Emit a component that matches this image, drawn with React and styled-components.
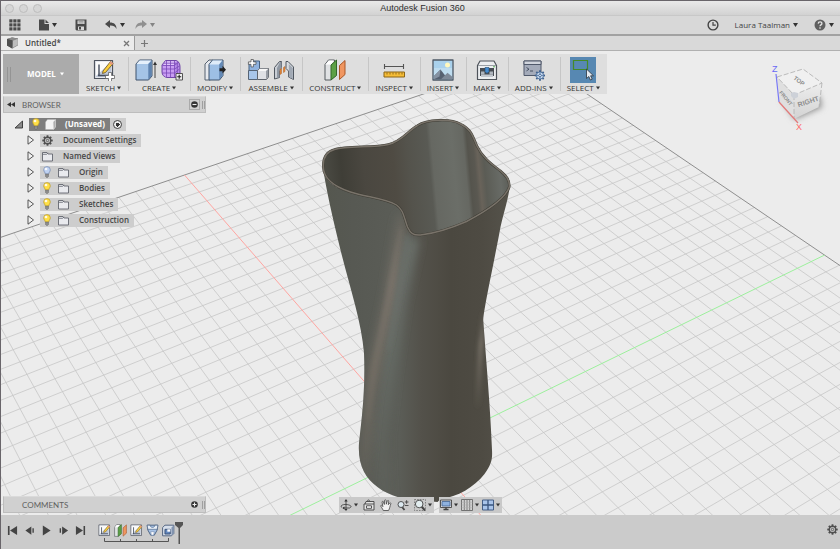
import React from 'react';
import styled, { createGlobalStyle } from 'styled-components';

const GlobalStyle = createGlobalStyle`
  * {
    box-sizing: border-box;
  }

  html, body, #root {
    height: 100%;
    margin: 0;
  }

  body {
    overflow: hidden;
    color: #444;
    font-family: 'Open Sans', 'Noto Sans', sans-serif;
    font-size: 8px;
    line-height: 12px;
  }

  button {
    margin: 0;
    padding: 0;
    border: none;
    background: none;
    color: inherit;
    font: inherit;
    white-space: nowrap;
  }

  svg {
    display: block;
    flex: none;
  }
`;

const WindowW = styled.div`
  display: flex;
  flex-flow: column;
  height: 100vh;
  border-top: 1px solid #69656a;
  border-left: 1px solid #69656a;
  background: #ececec;
`;

const TitleBar = styled.header`
  display: grid;
  grid-template-columns: 1fr auto 1fr;
  align-items: center;
  height: 15px;
  padding-left: 4px;
  background: linear-gradient(#e9e9e9, #d2d2d2);
  border-bottom: 1px solid #c8c8c8;

  & > h1 {
    margin: 0;
    font: 400 9px/12px 'Liberation Sans', sans-serif;
    color: #2f2f2f;
  }
`;

const Lights = styled.div`
  display: flex;
  gap: 5px;
`;

const Light = styled.button`
  width: 9px;
  height: 9px;
  border: 1px solid #bdbdbd;
  border-radius: 50%;
  background: #d6d6d6;
`;

const QuickBar = styled.nav`
  display: flex;
  justify-content: space-between;
  align-items: center;
  height: 20px;
  padding: 0 6px 0 8px;
  background: #d8d8d8;
  border-bottom: 2px solid #a2a2a2;
`;

const QuickSide = styled.div`
  display: flex;
  align-items: center;
  gap: ${props => props.gap}px;
`;

const QuickButton = styled.button`
  display: flex;
  align-items: center;
  gap: 3px;
  opacity: ${props => props.faded ? 0.5 : 1};
`;

const TabBar = styled.div`
  display: flex;
  height: 15px;
  background: #d9d9d9;
  border-bottom: 1px solid #b0b0b0;
`;

const Tab = styled.div`
  display: flex;
  align-items: center;
  gap: 7px;
  width: 134px;
  padding: 0 4px 0 6px;
  background: #ebebeb;
  border-right: 1px solid #999;
  font-weight: 600;

  & > span {
    flex: 1;
  }
`;

const NewTab = styled.button`
  padding: 0 5px;
`;

const Workspace = styled.main`
  position: relative;
  display: flex;
  flex-flow: column;
  align-items: flex-start;
  flex: 1;
  min-height: 0;
  padding: 3px 2px 2px;
`;

const Scene = styled.svg`
  position: absolute;
  top: 0;
  left: 0;
  width: 100%;
  height: 100%;
`;

const CubeW = styled.svg`
  position: absolute;
  top: 10px;
  right: 6px;
`;

const Ribbon = styled.div`
  position: relative;
  display: flex;
  height: 40px;
  margin-bottom: 2px;
  background: #dedede;
`;

const ModelButton = styled.button`
  display: flex;
  align-items: center;
  width: 76px;
  padding-left: 4px;
  gap: 4px;
  background: #ababab;
  color: #fff;
  font-weight: 700;
`;

const Grip = styled.span`
  width: 4px;
  height: 15px;
  margin-right: 12px;
  border: solid #949494;
  border-width: 0 1px;
`;

const Group = styled.section`
  display: flex;
  flex-flow: column;
  align-items: center;
  position: relative;
  padding: 3px 7px 0;

  & + &::before {
    content: '';
    position: absolute;
    left: 0;
    top: 3px;
    bottom: 3px;
    border-left: 1px solid #c6c6c6;
  }
`;

const GroupIcons = styled.div`
  display: flex;
  gap: 4px;
`;

const IconButton = styled.button`
  display: grid;
  place-items: center;
  height: 26px;
  width: ${props => props.$active ? 26 : 22}px;
  background: ${props => props.$active ? '#5788b2' : 'none'};
`;

const LabelButton = styled.button`
  display: flex;
  align-items: center;
  gap: 2px;
  height: 10px;
  line-height: 10px;
  color: #333;
`;

const PanelBar = styled.div`
  position: relative;
  display: flex;
  align-items: center;
  gap: 7px;
  width: 203px;
  height: 17px;
  padding: 0 0 0 3px;
  background: #d0d0d0;
  border: 1px solid #bdbdbd;
  border-top-color: #dadada;
  color: #606060;

  & > h2 {
    flex: 1;
    margin: 0;
    font: 400 8px/12px 'Lato', sans-serif;
  }
`;

const RoundButton = styled.button`
  display: grid;
  place-items: center;
  width: 11px;
  height: 11px;
  border: ${props => props.$framed ? '1px solid #aaa' : 'none'};
`;

const Handle = styled.i`
  width: 3px;
  height: 8px;
  margin-left: -5px;
  border: solid #a0a0a0;
  border-width: 0 1px;
`;

const Tree = styled.ul`
  position: relative;
  margin: 3px 0 0;
  padding: 0 0 0 11px;
  list-style: none;
`;

const Node = styled.li`
  display: flex;
  align-items: center;
  gap: 5px;
  height: 16px;
  margin-left: ${props => props.$root ? 0 : 12}px;
`;

const Chip = styled.div`
  display: flex;
  align-items: center;
  height: 13px;
  background: #cdcdcd;
`;

const ChipLabel = styled.button`
  display: flex;
  align-items: center;
  gap: ${props => props.$root ? 4 : 6}px;
  height: 13px;
  padding: 0 5px 0 2px;
  background: ${props => props.$root ? '#7e7e7e' : 'none'};
  color: ${props => props.$root ? '#fff' : '#464646'};
  font-weight: ${props => props.$root ? 700 : 600};

  & > span {
    margin-left: ${props => props.$root ? 5 : 4}px;
  }
`;

const Radio = styled.input`
  appearance: none;
  width: 9px;
  height: 9px;
  margin: 0 4px 0 3px;
  border: 1px solid #444;
  border-radius: 50%;
  background: radial-gradient(#333 0 2px, #eee 2px);
`;

const BottomRow = styled.div`
  position: relative;
  display: grid;
  grid-template-columns: 1fr auto 1fr;
  align-items: end;
  width: 100%;
  margin-top: auto;
`;

const NavBars = styled.div`
  display: flex;
  gap: 5px;
`;

const NavBar = styled.div`
  display: flex;
  align-items: center;
  gap: ${props => props.$gap}px;
  height: 16px;
  padding: 0 2px 0 1px;
  background: #c9c9c9;
`;

const NavButton = styled.button`
  display: flex;
  align-items: center;
  gap: 2px;
`;

const Footer = styled.footer`
  display: flex;
  align-items: flex-start;
  height: 34px;
  padding: 7px 2px 0 5px;
  background: #cbcbcb;
`;

const Playback = styled.div`
  display: flex;
  gap: 5px;
  padding-top: 2px;
`;

const PlayButton = styled.button`
  display: grid;
  place-items: center;
  width: 12px;
  height: 12px;
`;

const Timeline = styled.div`
  display: flex;
  flex: 1;
  padding-left: 12px;
`;

const Features = styled.div`
  display: flex;
  flex-flow: column;
  gap: 1px;
`;

const FeatureRow = styled.div`
  display: flex;
  gap: 3px;
  padding-top: 2px;
`;

const SettingsButton = styled.button`
  padding-top: 2px;
`;

/* ---------- small icons ---------- */

const Caret = ({ color = '#333', size = 5 }) => (
  <svg width={size} height="4" viewBox="0 0 5 4"><path d="M0 0h5L2.5 4z" fill={color} /></svg>
);

const GridIcon = () => (
  <svg width="12" height="12" viewBox="0 0 12 12" fill="#4a4a4a">
    {[0, 4, 8].map(y => [0, 4, 8].map(x => <rect key={x + '-' + y} x={x + 0.3} y={y + 0.3} width="3.2" height="3.2" />))}
  </svg>
);

const FileIcon = () => (
  <svg width="10" height="12" viewBox="0 0 10 12"><path d="M0 .5h5.5V5H10v6.5H0zM6.5.5L10 4H6.5z" fill="#4a4a4a" /></svg>
);

const SaveIcon = () => (
  <svg width="12" height="12" viewBox="0 0 12 12">
    <path d="M.5.5h11v11H1.500L.5 10.500z" fill="#4a4a4a" />
    <path d="M2.500 1.500h7V5h-7zM3 7.500h6V11H3z" fill="#d8d8d8" />
    <path d="M3.500 2.600h5M3.500 4h5" stroke="#777" strokeWidth=".6" />
    <path d="M4 8h2v2.500H4z" fill="#4a4a4a" />
  </svg>
);

const UndoIcon = ({ flip }) => (
  <svg width="12" height="10" viewBox="0 0 12 10">
    <path d="M0 4L5 0v2.600c4 0 6.500 2 6.500 6.400C10 6.300 8.200 5.500 5 5.600V8z" fill="#4a4a4a" transform={flip ? 'matrix(-1 0 0 1 12 0)' : undefined} />
  </svg>
);

const ClockIcon = () => (
  <svg width="12" height="12" viewBox="0 0 12 12" fill="none" stroke="#444" strokeWidth="1.400">
    <circle cx="6" cy="6" r="4.900" /><path d="M6 3v3.200h2.800" strokeWidth="1.200" />
  </svg>
);

const HelpIcon = () => (
  <svg width="12" height="12" viewBox="0 0 12 12">
    <circle cx="6" cy="6" r="5.500" fill="#606060" />
    <path d="M4.200 4.600c.1-2.300 3.800-2.200 3.700 0C7.800 5.900 6 5.900 6 7.300M6 8.300v1.400" fill="none" stroke="#e4e4e4" strokeWidth="1.300" />
  </svg>
);

const DocCube = () => (
  <svg width="11" height="12" viewBox="0 0 11 12">
    <path d="M0 2l5-1.500L11 1.500v6.500L5 11.500 0 8.500z" fill="#555" />
    <path d="M0 2l5-1.500L11 1.500 5.500 3.600z" fill="#8a8a8a" />
    <path d="M5.500 3.600L11 1.500V8L5.300 11.300z" fill="#bdbdbd" stroke="#888" strokeWidth=".4" />
    <path d="M0 2l5.500 1.600-.2 7.700L0 8.500z" fill="#505050" />
  </svg>
);

const CloseIcon = () => (
  <svg width="7" height="7" viewBox="0 0 7 7"><path d="M1 1l5 5M6 1L1 6" stroke="#777" strokeWidth="1.300" /></svg>
);

const PlusIcon = () => (
  <svg width="9" height="9" viewBox="0 0 9 9"><path d="M4.500 1v7M1 4.500h7" stroke="#777" strokeWidth="1.200" /></svg>
);

const Rewind = () => (
  <svg width="8" height="5" viewBox="0 0 8 5"><path d="M4 0v5L0 2.500zM8 0v5L4 2.500z" fill="#333" /></svg>
);

const DotIcon = ({ plus }) => (
  <svg width="7" height="7" viewBox="0 0 7 7">
    <circle cx="3.500" cy="3.500" r="3.300" fill="#333" />
    <path d={plus ? 'M1.500 3.500h4M3.500 1.500v4' : 'M1.500 3.500h4'} stroke="#eee" strokeWidth="1.100" />
  </svg>
);

const Bulb = ({ off }) => (
  <svg width="10" height="12" viewBox="0 0 10 12">
    <path d="M5 .6a3.300 3.300 0 0 1 3.300 3.300C8.300 5.600 6.700 6.500 6.700 8H3.300C3.300 6.500 1.700 5.600 1.700 3.900A3.300 3.300 0 0 1 5 .6z"
      fill={off ? '#bfd2f2' : '#ffdf45'} stroke={off ? '#7486ac' : '#b7982f'} strokeWidth=".7" />
    <ellipse cx="4" cy="3" rx="1.400" ry="1.200" fill="#fff" opacity=".85" />
    <path d="M3.500 8h3v2.500L5.500 11.500h-1l-1-1z" fill="#8b8b8b" stroke="#5e5e5e" strokeWidth=".4" />
  </svg>
);

const Folder = () => (
  <svg width="11" height="11" viewBox="0 0 11 11">
    <path d="M.5 10V1.500h4.500l1 1.500h4.500v7z" fill="#e9eaee" stroke="#62656e" strokeWidth=".9" />
    <path d="M.5 3.300h4.200L6 1.800" fill="none" stroke="#62656e" strokeWidth=".8" />
  </svg>
);

const BodyIcon = () => (
  <svg width="11" height="11" viewBox="0 0 11 11" stroke="#eee" strokeWidth=".3">
    <path d="M.5 3l2-2.500h8v7.500l-2 2.500h-8z" fill="#f3f3f3" stroke="#aaa" />
    <path d="M8.200 3l2.300-2.500v7.500l-2 2.500z" fill="#aeaeae" />
  </svg>
);

const Gear = () => (
  <svg width="11" height="11" viewBox="-6 -6 12 12">
    {[0, 45, 90, 135].map(a => <rect key={a} x="-1" y="-5.700" width="2" height="11.400" fill="#4f4f4f" transform={`rotate(${a})`} />)}
    <circle r="3.500" fill="#cbcbcb" stroke="#4f4f4f" strokeWidth="1.500" />
    <circle r="1.300" fill="#cbcbcb" stroke="#4f4f4f" strokeWidth=".9" />
  </svg>
);

const Arrow = ({ open }) => open
  ? <svg width="10" height="9" viewBox="0 0 10 9"><path d="M1 8L8.500 1v7z" fill="#8b8b8b" stroke="#333" strokeWidth=".9" /></svg>
  : <svg width="9" height="10" viewBox="0 0 9 10"><path d="M2 .8v8.400L7.500 5z" fill="#f1f1f1" stroke="#444" strokeWidth=".9" /></svg>;

/* ---------- ribbon icons, all on a 22 unit box ---------- */

const Big = ({ children, size = 22 }) => (
  <svg width={size} height={size} viewBox="0 0 22 22" strokeLinejoin="round">{children}</svg>
);

const SketchPad = () => (
  <>
    <path d="M1.500 1.500h18v18h-18z" fill="#e6e8ee" stroke="#4e545f" strokeWidth="1.200" />
    <path d="M3 3h15v15H3z" fill="#bfc8d8" />
    <path d="M3 3h15L3 17z" fill="#fafafa" />
    <path d="M5 16.500h12M6 17V5.500" stroke="#444c5c" strokeWidth="1.400" />
    <path d="M10 12l7.500-9.500 2.700 2L12.500 13.500 9.500 14.500z" fill="#fbce3a" stroke="#665024" strokeWidth=".8" />
    <path d="M16.200 4.200l1.500-2 2.700 2-1.600 2z" fill="#e39a80" />
  </>
);

const SketchIcon = () => (
  <Big>
    <SketchPad />
    <path d="M15.500 13.500h3v3h3v3h-3v3h-3v-3h-3v-3h3z" fill="#fff" stroke="#555" strokeWidth=".7" />
  </Big>
);

const ExtrudeIcon = () => (
  <Big>
    <path d="M1 5l3.500-4H17v16l-3.500 4H1z" fill="#a5c4e6" stroke="#3f536c" />
    <path d="M1.500 5l3.200-3.500h11.800L13 5z" fill="#e5f0fb" />
    <path d="M13.300 5l3.300-3.500V17l-3.300 3.500z" fill="#5f83af" />
    <path d="M20 5v14" stroke="#444" /><path d="M18 6l2-3.500L22 6z" fill="#333" />
  </Big>
);

const FormIcon = () => (
  <Big>
    <path d="M4.500 1.500h11C18 3 19 5 19 8v6l-3 4.500H6C3 18 1 16 1 13V6z" fill="#b88ce8" stroke="#7146a6" />
    <path d="M2 6.500h11.500V18H6c-3-.5-4-2-4-5z" fill="#c99df3" />
    <path d="M4.500 2.200h10.500l-2 3.800H2.500z" fill="#e0c5fa" />
    <path d="M1.500 6.500h12L17.500 3M1.500 10h12l5-3M1.500 14h12l5-4M3 4.200h12M5.500 2v4.500V18M9.500 2v4.500V18.500M13.500 2v4.500V18.500M16.300 3.500V18" fill="none" stroke="#7a48b8" strokeWidth=".8" />
    <path d="M15 14.500h6.500V21H15z" fill="#eee" stroke="#444" strokeWidth=".9" />
    <path d="M18.200 15.800v4M16.200 17.800h4" stroke="#222" strokeWidth="1.100" />
  </Big>
);

const PressPullIcon = () => (
  <Big>
    <path d="M1 5l4-4h4v19l-4 1H1z" fill="#e6e9ee" stroke="#55616f" />
    <path d="M5 5.500L8.500 1H19v15.500L15.500 21H5z" fill="#9dbfe5" stroke="#3f536c" />
    <path d="M5.500 5.500L8.700 1.500h9.600L15 5.500z" fill="#dfecf9" />
    <path d="M15.200 5.500l3.300-4v15l-3.300 4z" fill="#6389b6" />
    <path d="M15.500 9.200h3V6.800l3.500 3.900-3.500 3.900v-2.400h-3z" fill="#222" />
  </Big>
);

const ComponentIcon = () => (
  <Big>
    <path d="M2 5l3-3h7.500v9L10 13H2z" fill="#8fb2de" stroke="#46607f" />
    <path d="M1.500 11.500h9V20.500h-9z" fill="#a8c6ea" stroke="#566475" />
    <path d="M10.500 12l2-2.500h9v8.500l-2 2.500h-9z" fill="#dfe1e5" stroke="#5f646c" />
    <path d="M10.800 12l2-2.200h8.300L19 12z" fill="#f8f8f8" /><path d="M19 12v8.200l2.300-2.300V10z" fill="#989da5" />
    <path d="M4 .5h2.400v2.400H9v2.400H6.400v2.600H4V5.300H1.400V2.900H4z" fill="#fff" stroke="#444" strokeWidth=".7" />
  </Big>
);

const JointIcon = () => (
  <Big>
    <path d="M1.500 8.500L6.500 2.500h2v6l-2 3.500v6.500l-5 1.500z" fill="#c9ced5" stroke="#505760" />
    <path d="M4 9l3-6h1.500v6L6.500 12v6L4 19z" fill="#8f98a3" />
    <path d="M13 2.500h2l5.500 5.500v12.500L15.500 18v-6L13 9.500z" fill="#d8dce1" stroke="#505760" />
    <path d="M15.800 5l4 4v11l-4-2z" fill="#a1a9b4" />
    <path d="M8.500 9.500l-1.500 1v5l1.500-1zM12 7.500l-1.500 1v5l1.500-1z" fill="#ed8d3d" stroke="#a65b21" strokeWidth=".5" />
  </Big>
);

const PlaneShapes = () => (
  <>
    <path d="M1 5.500L4.500 1h6v16L7 21H1z" fill="#e0e2e4" stroke="#545a5e" />
    <path d="M1.500 5.500L4.700 1.500h5L7 5.500z" fill="#fff" />
    <path d="M7 6l5.500-5v15.500L7 21z" fill="#5ca045" stroke="#33672a" />
    <path d="M15.500 6.500L21 1.500v14l-5.500 5z" fill="#f09660" stroke="#a95727" />
  </>
);

const PlaneIcon = () => <Big><PlaneShapes /></Big>;

const MeasureIcon = () => (
  <Big>
    <path d="M1 7.500h20M1.500 5v5M20.500 5v5" stroke="#555" strokeWidth="1.100" />
    <path d="M1 13h20.500v5H1z" fill="#f6bd37" stroke="#8b6517" />
    <path d="M4 13.500v2M7 13.500v2M10 13.500v2M13 13.500v2M16 13.500v2M19 13.500v2" stroke="#7e5a15" strokeWidth=".8" />
  </Big>
);

const ImageIcon = () => (
  <Big>
    <path d="M1 1h20v20H1z" fill="#bedcef" stroke="#4c5866" strokeWidth="1.300" />
    <path d="M2 2h18v7H2z" fill="#a9d1ec" /><circle cx="15.500" cy="6" r="2.500" fill="#fff8bd" />
    <path d="M2 17l6.500-6.500L16 20.200H2z" fill="#566171" />
    <path d="M9 20.200l6.500-6.500 4.800 4v2.500z" fill="#7e8998" />
    <path d="M2 17l6.500-6.500-1 7L2 20.200z" fill="#8592a2" />
  </Big>
);

const PrintIcon = () => (
  <Big>
    <path d="M1.500 6.500L4 2h14l2.500 4.500V20.500h-19z" fill="#eceef0" stroke="#4e535a" strokeWidth="1.200" />
    <path d="M2 6.500h18" stroke="#9a9fa5" /><path d="M4 9h14v8H4z" fill="#474c53" />
    <path d="M5 12.500h3.500v3H5zM13.500 12.500H17v3h-3.500z" fill="#aeb5be" />
    <path d="M9 8.500h4v4l-2 2-2-2z" fill="#448bd0" stroke="#23496e" strokeWidth=".6" />
    <path d="M5 15.500h12v2.500H5z" fill="#c2c7ce" /><circle cx="18" cy="7.800" r=".8" fill="#40a840" />
  </Big>
);

const ScriptIcon = () => (
  <Big>
    <path d="M1 2h17v14.500H1z" fill="#a4abba" stroke="#50596b" />
    <path d="M1 2h17v3.500H1z" fill="#d1d5dd" stroke="#50596b" />
    <path d="M3.500 8.500l2.500 1.700-2.500 1.700M7 12h3" fill="none" stroke="#303a4c" strokeWidth=".8" />
    <g transform="translate(17 16.500)" stroke="#3e618f">
      {[0, 45, 90, 135].map(a => <path key={a} d="M0-5.200v10.400" strokeWidth="1.800" transform={`rotate(${a})`} />)}
      <circle r="3.600" fill="#c8dcf3" strokeWidth=".8" /><path d="M-3 0h6M0-3v6" strokeWidth=".7" /><circle r="1.300" fill="#e9f1fa" strokeWidth=".8" />
    </g>
  </Big>
);

const SelectIcon = () => (
  <svg width="26" height="26" viewBox="0 0 26 26">
    <path d="M3.500 3.500h14v9h-14z" fill="none" stroke="#448a27" strokeWidth="1.200" />
    <path d="M16.500 12v9.500l2.300-2 1.600 3.500 1.800-.9-1.600-3.300h2.900z" fill="#e5ebf1" stroke="#29343f" strokeWidth=".8" />
  </svg>
);

/* ---------- navigation icons ---------- */

const Small = ({ children }) => (
  <svg width="12" height="12" viewBox="0 0 12 12" fill="none" stroke="#444" strokeWidth=".9">{children}</svg>
);

const OrbitIcon = () => (
  <Small>
    <path d="M6 1v10M2 8.500C-1 6.500 4 5 7 5.500s6 2 2.500 3.500H3" />
    <path d="M4.300 2.500L6 0l1.700 2.500zM4.500 10L6 12l1.500-2zM4.500 7.500v3L2.300 9z" fill="#333" stroke="none" />
  </Small>
);

const LookAtIcon = () => (
  <Small><path d="M1 5h10v6H1zM2 5l1-2.500h8V5M4 2.500L5.500.7 7 2.500" fill="#e3e3e3" /><path d="M3.500 6.800h5v2.500h-5z" fill="#fff" /></Small>
);

const PanIcon = () => (
  <Small>
    <path d="M3.300 11.500C2.500 9.500 1 8 .7 6.700c.5-.8 1.500-.3 2.200.9L2 3c.3-1 1.300-.8 1.500 0l.8 2.500L4.500 1.500c.4-1 1.500-.8 1.600 0l.2 3.700L7.300 2c.4-.9 1.500-.6 1.400.3L8.300 5.700 9.700 4c.6-.5 1.400 0 1.100.8C10 7 9.800 9.500 8.500 11.500z" fill="#f3f3f3" strokeWidth=".8" />
  </Small>
);

const ZoomIcon = () => (
  <Small><path d="M4.700 7.500L7.500 11" strokeWidth="1.800" /><circle cx="4" cy="5.500" r="3" fill="#dce9f0" /><path d="M7.800 3h3.700M9.600 1.200v3.600M7.800 6.500h3.700" /></Small>
);

const FitIcon = () => (
  <Small>
    <path d="M.5.5h11v11H.5z" stroke="#777" strokeDasharray="1.500 1.200" />
    <path d="M7.500 7.500l3.500 4" strokeWidth="2" /><circle cx="5.200" cy="5" r="3.800" fill="#e3eef0" />
  </Small>
);

const DisplayIcon = () => (
  <Small><path d="M.5 1h11v7.500H.5z" fill="#ddd" /><path d="M2 2.500h8V7H2z" fill="#8fb2df" stroke="#4c6c98" /><path d="M3.500 10.500h5M6 8.500v2" strokeWidth="1.500" /></Small>
);

const GridSnapIcon = () => (
  <Small><path d="M.5.5h11v11H.5z" fill="#d2d2d2" stroke="#666" /><path d="M3.300.5v11M6 .5v11M8.700.5v11" stroke="#777" /><path d="M.5 3.300h11M.5 6h11M.5 8.700h11" stroke="#aaa" strokeWidth=".5" /></Small>
);

const ViewportsIcon = () => (
  <Small><path d="M.5 1h11v10H.5z" fill="#a9c4ea" stroke="#39547d" /><path d="M6 1v10M.5 6h11" stroke="#39547d" strokeWidth="1.300" /></Small>
);

/* ---------- timeline icons ---------- */

const LoftIcon = () => (
  <Big size={13}>
    <path d="M2 2h18l-1 8-5 9H8L3 10z" fill="#a8c4e7" stroke="#43597a" strokeWidth="1.500" />
    <path d="M2 2h5c0 5 8 5 8 0h5l-1 7H3z" fill="#e7eff8" stroke="#43597a" /><path d="M8 13h6l-1 6H9z" fill="#fff" stroke="#6d87ab" />
  </Big>
);

const ShellIcon = () => (
  <Big size={13}>
    <path d="M1 6l4-4h15v14l-4 4H1z" fill="#d7dfeb" stroke="#465a78" strokeWidth="1.500" />
    <path d="M16 6l4-4v14l-4 4z" fill="#8193af" /><path d="M5 9h9v8H5z" fill="#6387bd" stroke="#354c70" strokeWidth="1.500" /><path d="M9 9h5v4H9z" fill="#fff" />
  </Big>
);

const playShapes = [
  ['First', 'M1 1h1.800v10H1zM11 1v10L3.300 6z'],
  ['Previous', 'M8 1.500v9L1.500 6zM9.200 3.500h1.500v5H9.200z'],
  ['Play', 'M2 .5L10.500 6 2 11.500z'],
  ['Next', 'M4.500 1.500v9L11 6zM1.800 3.500h1.500v5H1.800z'],
  ['Last', 'M1 1v10l7.700-5zM9.300 1H11v10H9.300z'],
];

/* ---------- modelling canvas ---------- */

const CELLS = 25;

// ground plane (u, v) to canvas; both axes sit at 1, the far corner at 0, 0
const project = (u, v) => {
  const w = 1 - 0.1314 * u - 0.2096 * v;
  return [(532 - 372.2 * u + 119.3 * v) / w, (57 + 95 * u + 144.6 * v) / w];
};

const segment = (a, b) => `M${project(...a).map(n => n.toFixed(1))}L${project(...b).map(n => n.toFixed(1))}`;

const gridLines = Array.from({ length: CELLS * 2 }, (_, i) => (i + 1) / CELLS)
  .filter(t => t !== 1)
  .map(t => segment([t, 0], [t, 2]) + segment([0, t], [2, t]))
  .join('');

const RIM = 'M322.800 165C323 155 328 151 334 149.500C346 145.500 374 148 388 144.500C402 141 407 131 417 125.500C426 119.500 450 118 460 124C471 129 472.500 137 476.500 146C481.500 157 491 164 499.500 170.500C505.500 175.500 509.500 180 508.800 187C505 198 488 210 466 221.500C450 228.500 433 233.500 420 235C413 235.500 410 233.500 407 227C403 216 403 210 396 205C387 199 366 197 350 192C334 187 322 178 322.800 165Z';

const BODY = 'M322.300 166C325 187 332 217 340 250C350 290 361 322 363.500 353C365 393 361 420 358.500 443C357 465 365 478 377 487C390 497 405 499 415 500L437 502L440 499C457 497 474 487 484 474C491 464 492 460 491.500 450C490 410 486 365 482.700 320C484 305 494 260 500 227C504 210 508 198 509.300 186L466 222C440 233 420 236 413 235C403 229 406 207 392 202C370 195 322 195 322.300 166Z';

const Vase = () => (
  <g>
    <defs>
      <linearGradient id="outer" gradientUnits="userSpaceOnUse" x1="325" y1="300" x2="510" y2="300">
        <stop offset="0" stopColor="#55574f" />
        <stop offset=".15" stopColor="#575953" />
        <stop offset=".4" stopColor="#5b5d57" />
        <stop offset=".52" stopColor="#53514a" />
        <stop offset=".68" stopColor="#4b4840" />
        <stop offset=".85" stopColor="#4e4b43" />
        <stop offset="1" stopColor="#55534b" />
      </linearGradient>
      <linearGradient id="inner" gradientUnits="userSpaceOnUse" x1="322" y1="170" x2="509" y2="153">
        <stop offset="0" stopColor="#4c4c45" />
        <stop offset=".1" stopColor="#3f3e37" />
        <stop offset=".22" stopColor="#4a4740" />
        <stop offset=".38" stopColor="#4f4b43" />
        <stop offset=".46" stopColor="#54534c" />
        <stop offset=".57" stopColor="#595a54" />
        <stop offset=".59" stopColor="#666862" />
        <stop offset=".7" stopColor="#6b6e68" />
        <stop offset=".76" stopColor="#666862" />
        <stop offset=".78" stopColor="#55544d" />
        <stop offset=".81" stopColor="#5a5851" />
        <stop offset=".83" stopColor="#69635a" />
        <stop offset=".86" stopColor="#5b5c55" />
        <stop offset=".94" stopColor="#686b66" />
        <stop offset="1" stopColor="#585a54" />
      </linearGradient>
      <linearGradient id="warm" gradientUnits="userSpaceOnUse" x1="0" y1="210" x2="0" y2="490">
        <stop offset="0" stopColor="#7a736a" stopOpacity=".3" />
        <stop offset=".25" stopColor="#7a736a" />
        <stop offset=".6" stopColor="#736d64" />
        <stop offset="1" stopColor="#6b675e" stopOpacity=".4" />
      </linearGradient>
      <linearGradient id="cool" gradientUnits="userSpaceOnUse" x1="0" y1="230" x2="0" y2="500">
        <stop offset="0" stopColor="#6a6f6a" />
        <stop offset=".5" stopColor="#646963" />
        <stop offset="1" stopColor="#60635d" stopOpacity=".5" />
      </linearGradient>
      <linearGradient id="glint" gradientUnits="userSpaceOnUse" x1="0" y1="308" x2="0" y2="410">
        <stop offset="0" stopColor="#7b746a" stopOpacity="0" />
        <stop offset=".35" stopColor="#7b746a" />
        <stop offset="1" stopColor="#7b746a" stopOpacity="0" />
      </linearGradient>
      <filter id="soft" filterUnits="userSpaceOnUse" x="300" y="150" width="230" height="380"><feGaussianBlur stdDeviation="5" /></filter>
      <filter id="fine" filterUnits="userSpaceOnUse" x="300" y="150" width="230" height="380"><feGaussianBlur stdDeviation="2" /></filter>
      <clipPath id="bodyClip"><path d={BODY} /></clipPath>
    </defs>
    <path d={BODY} fill="url(#outer)" />
    <g clipPath="url(#bodyClip)" fill="none">
      <path d="M412 238L398 300L388 370L380 440L384 500" stroke="url(#cool)" strokeWidth="14" filter="url(#soft)" />
      <path d="M402 215L391 290C384 330 374 360 369 400L362 490" stroke="url(#warm)" strokeWidth="10" filter="url(#soft)" />
      <path d="M401 228L388 300L374 365L367 420" stroke="url(#warm)" strokeWidth="3" filter="url(#fine)" />
      <path d="M407 235L396 300L388 350" stroke="#686e69" strokeWidth="3" filter="url(#fine)" />
      <path d="M484 308L480 350L477 410" stroke="url(#glint)" strokeWidth="4" filter="url(#fine)" />
    </g>
    <path d={RIM} fill="url(#inner)" stroke="#3e3c34" strokeWidth="2.400" />
    <path d={RIM} fill="none" stroke="#79736a" strokeWidth="1.500" />
  </g>
);

const ModelView = () => (
  <Scene viewBox="0 51 840 464" preserveAspectRatio="xMidYMin slice" aria-hidden="true">
    <path d={gridLines} fill="none" stroke="#c6c6c6" strokeWidth=".8" />
    <path d={segment([0, 0], [2, 0]) + segment([0, 0], [0, 2])} stroke="#8e8e8e" />
    <path d={segment([1, 0], [1, 2])} stroke="#ffa5a1" />
    <path d={segment([0, 1], [2, 1])} stroke="#9df09d" />
    <Vase />
  </Scene>
);

const ViewCube = () => (
  <CubeW width="70" height="74" viewBox="764 61 70 74" fontFamily="Liberation Sans, sans-serif">
    <defs>
      <filter id="shadow" x="-50%" y="-50%" width="200%" height="200%"><feGaussianBlur stdDeviation="3" /></filter>
      <linearGradient id="side" x1="0" y1="0" x2="0" y2="1"><stop offset="0" stopColor="#ededed" /><stop offset="1" stopColor="#d3d3d3" /></linearGradient>
    </defs>
    <path d="M781 98L795 119 822 107 819 95z" fill="#888" filter="url(#shadow)" />
    <path d="M777 77L803 69 822 83 794 95z" fill="#f0f0f0" />
    <path d="M777 77L794 95V119L780 102z" fill="#dfdfdf" />
    <path d="M794 95L822 83 819 107 794 119z" fill="url(#side)" />
    <path d="M777 77L803 69 822 83 794 95zM794 95V119M822 83L819 107" fill="none" stroke="#b4b4b4" strokeWidth=".9" strokeDasharray="5 2" />
    <path d="M791 93l3-1 4 1v4l-4 2-3-3z" fill="#cdd1d8" />
    <g fill="#8d8d8d" fontWeight="bold" textAnchor="middle">
      <text x="0" y="2" fontSize="6" transform="translate(799 81) rotate(36)">TOP</text>
      <text x="0" y="3" fontSize="7" transform="translate(808 101) rotate(-18)">RIGHT</text>
      <text x="0" y="2" fontSize="5" transform="translate(786 98) rotate(50)">FRONT</text>
    </g>
    <path d="M776 74L779 102" stroke="#7777f5" strokeWidth="1.200" />
    <path d="M779 102L798 123" stroke="#e27979" strokeWidth="1.200" />
    <text x="772" y="72" fontSize="9" fill="#6868f5">Z</text>
    <text x="796" y="130" fontSize="9" fill="#ff6b6b">X</text>
  </CubeW>
);

const groups = [
  { label: 'SKETCH', icons: [SketchIcon] },
  { label: 'CREATE', icons: [ExtrudeIcon, FormIcon] },
  { label: 'MODIFY', icons: [PressPullIcon] },
  { label: 'ASSEMBLE', icons: [ComponentIcon, JointIcon] },
  { label: 'CONSTRUCT', icons: [PlaneIcon] },
  { label: 'INSPECT', icons: [MeasureIcon] },
  { label: 'INSERT', icons: [ImageIcon] },
  { label: 'MAKE', icons: [PrintIcon] },
  { label: 'ADD-INS', icons: [ScriptIcon] },
  { label: 'SELECT', icons: [SelectIcon], active: true },
];

const nodes = [
  { label: 'Document Settings', icons: [<Gear key="g" />] },
  { label: 'Named Views', icons: [<Folder key="f" />] },
  { label: 'Origin', icons: [<Bulb key="b" off />, <Folder key="f" />] },
  { label: 'Bodies', icons: [<Bulb key="b" />, <Folder key="f" />] },
  { label: 'Sketches', icons: [<Bulb key="b" />, <Folder key="f" />] },
  { label: 'Construction', icons: [<Bulb key="b" />, <Folder key="f" />] },
];

const App = () => (
  <>
    <GlobalStyle />
    <WindowW>
      <TitleBar>
        <Lights>
          <Light aria-label="Close" /><Light aria-label="Minimize" /><Light aria-label="Zoom" />
        </Lights>
        <h1>Autodesk Fusion 360</h1>
      </TitleBar>

      <QuickBar>
        <QuickSide gap={18}>
          <QuickButton aria-label="Data panel"><GridIcon /></QuickButton>
          <QuickButton aria-label="File"><FileIcon /><Caret /></QuickButton>
          <QuickButton aria-label="Save"><SaveIcon /></QuickButton>
          <QuickSide gap={10}>
            <QuickButton aria-label="Undo"><UndoIcon /><Caret /></QuickButton>
            <QuickButton aria-label="Redo" faded><UndoIcon flip /><Caret /></QuickButton>
          </QuickSide>
        </QuickSide>
        <QuickSide gap={16}>
          <QuickButton aria-label="Job status"><ClockIcon /></QuickButton>
          <QuickButton>Laura Taalman<Caret /></QuickButton>
          <QuickButton aria-label="Help"><HelpIcon /><Caret /></QuickButton>
        </QuickSide>
      </QuickBar>

      <TabBar>
        <Tab>
          <DocCube />
          <span>Untitled*</span>
          <button aria-label="Close tab"><CloseIcon /></button>
        </Tab>
        <NewTab aria-label="New tab"><PlusIcon /></NewTab>
      </TabBar>

      <Workspace>
        <ModelView />
        <Ribbon>
          <ModelButton><Grip />MODEL<Caret color="#fff" size={4} /></ModelButton>
          {groups.map(({ label, icons, active }) => (
            <Group key={label}>
              <GroupIcons>
                {icons.map((Icon, i) => (
                  <IconButton key={i} $active={active} aria-label={label + ' tool'}><Icon /></IconButton>
                ))}
              </GroupIcons>
              <LabelButton>{label}<Caret size={4} /></LabelButton>
            </Group>
          ))}
        </Ribbon>
        <ViewCube />

        <PanelBar>
          <button aria-label="Collapse"><Rewind /></button>
          <h2>BROWSER</h2>
          <RoundButton $framed aria-label="Hide browser"><DotIcon /></RoundButton>
          <Handle />
        </PanelBar>
        <Tree>
          <Node $root>
            <Arrow open />
            <Chip>
              <ChipLabel $root><Bulb /><BodyIcon /><span>(Unsaved)</span></ChipLabel>
              <Radio type="radio" name="component" aria-label="Activate component" defaultChecked />
            </Chip>
          </Node>
          {nodes.map(({ label, icons }) => (
            <Node key={label}>
              <Arrow />
              <Chip><ChipLabel>{icons}<span>{label}</span></ChipLabel></Chip>
            </Node>
          ))}
        </Tree>

        <BottomRow>
          <PanelBar>
            <svg width="8" height="5" />
            <h2>COMMENTS</h2>
            <RoundButton aria-label="Show comments"><DotIcon plus /></RoundButton>
            <Handle />
          </PanelBar>
          <NavBars>
            <NavBar $gap={5}>
              <NavButton aria-label="Orbit"><OrbitIcon /><Caret size={4} /></NavButton>
              <NavButton aria-label="Look at"><LookAtIcon /></NavButton>
              <NavButton aria-label="Pan"><PanIcon /></NavButton>
              <NavButton aria-label="Zoom"><ZoomIcon /></NavButton>
              <NavButton aria-label="Fit"><FitIcon /><Caret size={4} /></NavButton>
            </NavBar>
            <NavBar $gap={3}>
              <NavButton aria-label="Display settings"><DisplayIcon /><Caret size={4} /></NavButton>
              <NavButton aria-label="Grid and snaps"><GridSnapIcon /><Caret size={4} /></NavButton>
              <NavButton aria-label="Viewports"><ViewportsIcon /><Caret size={4} /></NavButton>
            </NavBar>
          </NavBars>
        </BottomRow>
      </Workspace>

      <Footer>
        <Playback>
          {playShapes.map(([name, d]) => (
            <PlayButton key={name} aria-label={name}>
              <svg width="11" height="11" viewBox="0 0 12 12"><path d={d} fill="#444" /></svg>
            </PlayButton>
          ))}
        </Playback>
        <Timeline>
          <Features>
            <FeatureRow>
              <button aria-label="Sketch 1"><Big size={13}><SketchPad /></Big></button>
              <button aria-label="Plane 1"><Big size={13}><PlaneShapes /></Big></button>
              <button aria-label="Sketch 2"><Big size={13}><SketchPad /></Big></button>
              <button aria-label="Loft 1"><LoftIcon /></button>
              <button aria-label="Shell 1"><ShellIcon /></button>
            </FeatureRow>
            <svg width="77" height="5" viewBox="0 0 77 5">
              <path d="M6.500 0v3.500h64V0M22.500 1v2.500M38.500 1v2.500M54.500 1v2.500" fill="none" stroke="#555" />
            </svg>
          </Features>
          <svg width="8" height="22" viewBox="0 0 8 22"><path d="M0 0h8v3L5 6v16H3.500V6L0 3z" fill="#555" /></svg>
        </Timeline>
        <SettingsButton aria-label="Settings"><Gear /></SettingsButton>
      </Footer>
    </WindowW>
  </>
);

export default App;
